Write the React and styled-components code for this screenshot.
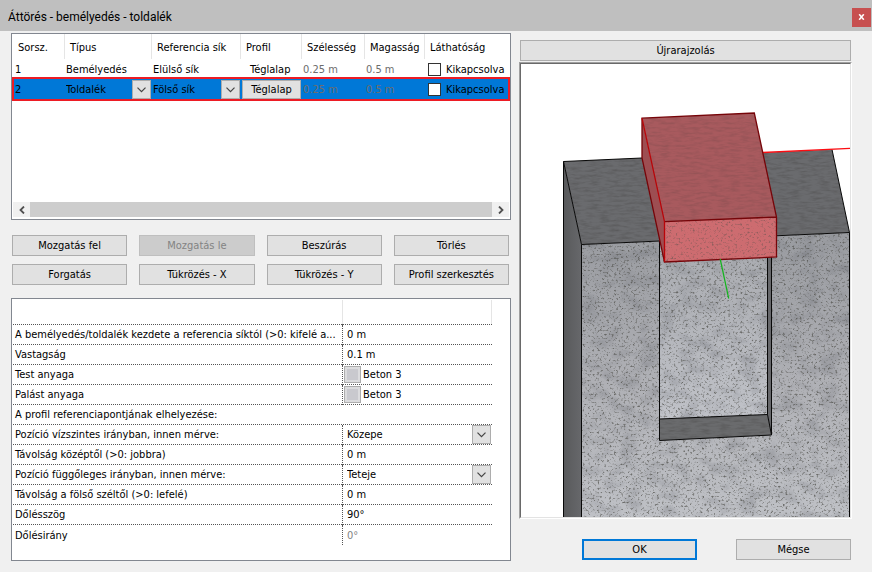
import React, { useState } from 'react';
import styled, { createGlobalStyle } from 'styled-components';

const GlobalStyle = createGlobalStyle`
  * {
    box-sizing: border-box;
  }

  body {
    margin: 0;
    background: #f0f0f0;
    color: #000;
    font-family: 'DejaVu Sans Condensed', Tahoma, sans-serif;
    font-size: 11px;
    line-height: 14px;
  }

  button,
  input,
  select {
    margin: 0;
    color: inherit;
    font: inherit;
  }
`;

const TitleBar = styled.header`
  display: flex;
  align-items: center;
  justify-content: space-between;
  height: 31px;
  padding: 3px 1px 0 8px;
  background: #bfbfbf;
`;

const Title = styled.h1`
  margin: 0;
  font-family: Roboto, 'Segoe UI', sans-serif;
  font-size: 12px;
  font-weight: 400;
  line-height: 20px;
`;

const CloseButton = styled.button`
  display: grid;
  place-items: center;
  width: 19px;
  height: 19px;
  padding: 0;
  border: 0;
  background: #c75050;
`;

const Content = styled.main`
  display: grid;
  grid-template-columns: minmax(0, 500fr) minmax(0, 333fr);
  gap: 8px;
  padding: 2px 20px 11px 11px;
`;

const Preview = styled.section`
  display: flex;
  flex-direction: column;
  padding-top: 7px;
`;

const Panel = styled.div`
  border: 1px solid #828790;
  background: #fff;
`;

const ListArea = styled.div`
  min-height: 168px;
  padding: 0 2px;
`;

const List = styled.table`
  width: 100%;
  border-spacing: 0;
  table-layout: fixed;
`;

const HeadCell = styled.th`
  width: ${({ $width }) => $width || 'auto'};
  height: 25px;
  padding: 2px 0 0 ${({ $first }) => ($first ? '4px' : '5px')};
  border-left: ${({ $first }) => ($first ? '0' : '1px solid #e5e5e5')};
  font-weight: 400;
  text-align: left;
  white-space: nowrap;
`;

const ListRow = styled.tr`
  background: ${({ $selected }) => ($selected ? '#0078d7' : '#fff')};
  outline: ${({ $selected }) => ($selected ? '2px solid #ed1c24' : 'none')};
`;

const ListCell = styled.td`
  height: 20px;
  padding: 1px 0 0 ${({ $indent }) => $indent || '2px'};
  color: ${({ $muted }) => ($muted ? '#6d6d6d' : 'inherit')};
  white-space: nowrap;
`;

const CheckLabel = styled.label`
  display: flex;
  align-items: center;
  gap: 5px;
`;

const CheckBox = styled.input`
  flex: none;
  width: 13px;
  height: 13px;
  border: 1px solid #333;
  background: #fff;
  appearance: none;

  &:checked {
    background: #333;
    box-shadow: inset 0 0 0 2px #fff;
  }
`;

const ComboBox = styled.div`
  display: grid;
  grid-template-columns: minmax(0, 1fr) 19px;
  height: 19px;
`;

const ComboSelect = styled.select`
  grid-area: 1 / 1 / 2 / 3;
  padding: 0 20px 0 0;
  border: 0;
  border-radius: 0;
  background: transparent;
  appearance: none;
`;

const ComboArrow = styled.span`
  grid-area: 1 / 2 / 2 / 3;
  display: grid;
  place-items: center;
  border: 1px solid #adadad;
  background: #e1e1e1;
  pointer-events: none;
`;

const ScrollBar = styled.div`
  display: flex;
  height: 15px;
  margin: 0 1px 2px;
`;

const ScrollButton = styled.button`
  display: grid;
  place-items: center;
  width: 17px;
  padding: 0;
  border: 0;
  background: #f0f0f0;
`;

const ScrollThumb = styled.div`
  flex: 1;
  background: #cdcdcd;
`;

const Button = styled.button`
  height: 21px;
  padding: 0 4px;
  border: ${({ $primary }) => ($primary ? '2px solid #0078d7' : '1px solid #adadad')};
  background: #e1e1e1;
  line-height: 14px;
  white-space: nowrap;

  &:disabled {
    border-color: #bfbfbf;
    background: #ccc;
    color: #838383;
  }
`;

const CellButton = styled(Button)`
  display: block;
  width: 100%;
  height: 19px;
`;

const ButtonGrid = styled.div`
  display: grid;
  grid-template-columns: repeat(4, minmax(0, 1fr));
  gap: 8px 12px;
  margin: 15px 2px 13px 1px;
`;

const Properties = styled(Panel)`
  padding: 0 18px 15px 1px;
`;

const PropertyTable = styled.table`
  width: 100%;
  border-spacing: 0;
  table-layout: fixed;
`;

const PropertyHead = styled.td`
  width: ${({ $width }) => $width || 'auto'};
  height: 26px;
  padding: 1px 0 0;
  border-bottom: 1px dotted #555;
`;

const HeadSeparator = styled.div`
  height: 24px;
  border-left: ${({ $left }) => ($left ? '1px solid #e5e5e5' : '0')};
  border-right: ${({ $right }) => ($right ? '1px solid #e5e5e5' : '0')};
`;

const PropertyName = styled.th`
  height: 20px;
  padding: 1px 0 0 2px;
  border-bottom: ${({ $last }) => ($last ? '0' : '1px dotted #555')};
  overflow: hidden;
  font-weight: 400;
  text-align: left;
  text-overflow: ellipsis;
  white-space: nowrap;
`;

const PropertyValue = styled.td`
  height: 20px;
  padding: 0 0 0 1px;
  border-left: 1px dotted #555;
  border-bottom: ${({ $last }) => ($last ? '0' : '1px dotted #555')};
`;

const ValueInput = styled.input`
  display: block;
  width: 100%;
  height: 18px;
  padding: 0 3px;
  border: 0;
  background: transparent;

  &:disabled {
    color: #838383;
  }
`;

const ValueCombo = styled(ComboBox)`
  padding-right: 1px;

  select {
    padding-left: 3px;
  }
`;

const Material = styled.div`
  display: flex;
  align-items: center;
  gap: 2px;
`;

const Swatch = styled.button`
  width: 17px;
  height: 17px;
  padding: 0;
  border: 1px solid #adadad;
  background: #c9c9ce;
  box-shadow: inset 0 0 0 2px #dcdcde;
`;

const RedrawButton = styled(Button)`
  margin: 0 1px 1px;
`;

const Viewport = styled.div`
  border: 1px solid;
  border-color: #a0a0a0 #fff #fff #a0a0a0;
`;

const ViewportInner = styled.div`
  border: 1px solid;
  border-color: #696969 #e3e3e3 #e3e3e3 #696969;
  background: #fff;

  svg {
    display: block;
    width: 100%;
    height: auto;
  }
`;

const Footer = styled.footer`
  display: flex;
  justify-content: flex-end;
  gap: 39px;
  margin: 20px 1px 0;

  button {
    width: 115px;
  }
`;

const Chevron = () => (
  <svg width="9" height="6" viewBox="0 0 9 6" fill="none" aria-hidden="true">
    <path d="M0.5 0.7L4.5 4.7L8.5 0.7" stroke="#444" strokeWidth="1.2" />
  </svg>
);

const Combo = ({ as: Box = ComboBox, options, ...rest }) => (
  <Box>
    <ComboSelect {...rest}>
      {options.map((option) => (
        <option key={option}>{option}</option>
      ))}
    </ComboSelect>
    <ComboArrow>
      <Chevron />
    </ComboArrow>
  </Box>
);

const columns = [
  { title: 'Sorsz.', width: '50px' },
  { title: 'Típus', width: '87px' },
  { title: 'Referencia sík', width: '89px' },
  { title: 'Profil', width: '61px' },
  { title: 'Szélesség', width: '63px' },
  { title: 'Magasság', width: '60px' },
  { title: 'Láthatóság' },
];

const types = ['Bemélyedés', 'Toldalék'];
const planes = ['Elülső sík', 'Fölső sík'];

const items = [
  { id: 1, type: 'Bemélyedés', plane: 'Elülső sík' },
  { id: 2, type: 'Toldalék', plane: 'Fölső sík' },
];

const actions = [
  'Mozgatás fel',
  'Mozgatás le',
  'Beszúrás',
  'Törlés',
  'Forgatás',
  'Tükrözés - X',
  'Tükrözés - Y',
  'Profil szerkesztés',
];

const properties = [
  {
    id: 'start',
    name: 'A bemélyedés/toldalék kezdete a referencia síktól (>0: kifelé a...',
    value: '0 m',
  },
  { id: 'thickness', name: 'Vastagság', value: '0.1 m' },
  { id: 'body', name: 'Test anyaga', material: 'Beton 3' },
  { id: 'mantle', name: 'Palást anyaga', material: 'Beton 3' },
  { id: 'anchor', name: 'A profil referenciapontjának elhelyezése:' },
  {
    id: 'horizontal',
    name: 'Pozíció vízszintes irányban, innen mérve:',
    options: ['Közepe', 'Bal széle', 'Jobb széle'],
  },
  { id: 'fromCenter', name: 'Távolság középtől (>0: jobbra)', value: '0 m' },
  {
    id: 'vertical',
    name: 'Pozíció függőleges irányban, innen mérve:',
    options: ['Teteje', 'Közepe', 'Alja'],
  },
  { id: 'fromTop', name: 'Távolság a fölső széltől (>0: lefelé)', value: '0 m' },
  { id: 'angle', name: 'Dőlésszög', value: '90°' },
  { id: 'direction', name: 'Dőlésirány', value: '0°', disabled: true },
];

const ItemRow = ({ item, selected, onSelect }) => {
  const [hidden, setHidden] = useState(false);

  return (
    <ListRow $selected={selected} onClick={onSelect}>
      <ListCell $indent="1px">{item.id}</ListCell>
      <ListCell>
        {selected ? (
          <Combo aria-label="Típus" defaultValue={item.type} options={types} />
        ) : (
          item.type
        )}
      </ListCell>
      <ListCell>
        {selected ? (
          <Combo
            aria-label="Referencia sík"
            defaultValue={item.plane}
            options={planes}
          />
        ) : (
          item.plane
        )}
      </ListCell>
      <ListCell $indent={selected ? '2px' : '10px'}>
        {selected ? <CellButton type="button">Téglalap</CellButton> : 'Téglalap'}
      </ListCell>
      <ListCell $muted>0.25 m</ListCell>
      <ListCell $muted>0.5 m</ListCell>
      <ListCell $indent="4px">
        <CheckLabel>
          <CheckBox
            type="checkbox"
            checked={hidden}
            onChange={() => setHidden(!hidden)}
          />
          Kikapcsolva
        </CheckLabel>
      </ListCell>
    </ListRow>
  );
};

const PropertyRow = ({ property, last }) => {
  const { id, name, value, material, options, disabled } = property;

  if (!value && !material && !options) {
    return (
      <tr>
        <PropertyName colSpan={2}>{name}</PropertyName>
      </tr>
    );
  }

  return (
    <tr>
      <PropertyName $last={last} scope="row">
        <label htmlFor={id}>{name}</label>
      </PropertyName>
      <PropertyValue $last={last}>
        {value && <ValueInput id={id} defaultValue={value} disabled={disabled} />}
        {material && (
          <Material>
            <Swatch id={id} type="button" />
            {material}
          </Material>
        )}
        {options && <Combo as={ValueCombo} id={id} options={options} />}
      </PropertyValue>
    </tr>
  );
};

const Scene = () => (
  <svg viewBox="521 64 329 453" role="img" aria-label="3D">
    <defs>
      <linearGradient id="front" x1="0" y1="0" x2="0" y2="1">
        <stop offset="0" stopColor="#999ba0" />
        <stop offset="0.55" stopColor="#b0b1b6" />
        <stop offset="1" stopColor="#bfc1c6" />
      </linearGradient>
      <linearGradient id="niche" x1="0" y1="0" x2="0" y2="1">
        <stop offset="0" stopColor="#a8aaaf" />
        <stop offset="1" stopColor="#c0c2c8" />
      </linearGradient>
      <linearGradient id="side" x1="0" y1="0" x2="1" y2="0">
        <stop offset="0" stopColor="#58595b" />
        <stop offset="1" stopColor="#67686b" />
      </linearGradient>
      <filter id="speckle" x="0" y="0" width="100%" height="100%" colorInterpolationFilters="sRGB">
        <feTurbulence type="fractalNoise" baseFrequency="0.42 0.5" numOctaves="3" seed="7" />
        <feColorMatrix values="0 0 0 0 0.3  0 0 0 0 0.3  0 0 0 0 0.28  4 0 0 0 -2.2" />
        <feComposite in2="SourceGraphic" operator="in" />
      </filter>
      <filter id="blotch" x="0" y="0" width="100%" height="100%" colorInterpolationFilters="sRGB">
        <feTurbulence type="fractalNoise" baseFrequency="0.05 0.08" numOctaves="4" seed="3" />
        <feColorMatrix values="0 0 0 0 0.3  0 0 0 0 0.31  0 0 0 0 0.34  1.6 0 0 0 -0.7" />
        <feComposite in2="SourceGraphic" operator="in" />
      </filter>
      <filter id="streak" x="0" y="0" width="100%" height="100%" colorInterpolationFilters="sRGB">
        <feTurbulence type="fractalNoise" baseFrequency="0.1 0.4" numOctaves="3" seed="11" />
        <feColorMatrix values="0 0 0 0 0.2  0 0 0 0 0.19  0 0 0 0 0.18  2 0 0 0 -0.8" />
        <feComposite in2="SourceGraphic" operator="in" />
      </filter>
    </defs>

    {/* concrete block */}
    <path d="M563.5 161.5L581.5 244.5V517H563.5Z" fill="url(#side)" />
    <path d="M563.5 161.5L832 149.5L849.5 232.5L581.5 244.5Z" fill="#6a6b6e" />
    <path d="M563.5 161.5L832 149.5L849.5 232.5L581.5 244.5Z" filter="url(#streak)" opacity="0.26" />
    <path d="M581.5 244.5L849.5 232.5V517H581.5Z" fill="url(#front)" />

    {/* recess */}
    <path d="M659.5 241H767.5V414.5L659.5 419Z" fill="url(#niche)" />
    <path d="M581.5 244.5L849.5 232.5V517H581.5Z" filter="url(#blotch)" opacity="0.35" />
    <path d="M581.5 244.5L849.5 232.5V517H581.5Z" filter="url(#speckle)" opacity="0.7" />
    <path d="M767.5 236H771.5V435L767.5 414.5Z" fill="#67686b" />
    <path d="M659.5 419L767.5 414.5L771.5 435L659.5 440.5Z" fill="#6a6b6d" />
    <path d="M659.5 419L767.5 414.5L771.5 435L659.5 440.5Z" filter="url(#streak)" opacity="0.25" />

    <g fill="none" stroke="#080808" strokeWidth="1">
      <path d="M563.5 517V161.5L642 158M563.5 161.5L581.5 244.5V517M581.5 244.5L660 241M771 236L849.5 232.5L832 149.5M849.5 232.5V517" />
      <path d="M659.5 241V440.5L771.5 435V236M659.5 419L767.5 414.5V236M767.5 414.5L771.5 435" />
    </g>
    <path d="M763 152.5L850 148.3" stroke="#fb0d12" strokeWidth="1.3" />

    {/* extrusion */}
    <path d="M642 118.2L754.3 113L776.5 217L664.5 221.7Z" fill="#a85a5e" />
    <path d="M642 118.2L664.5 221.7V262L642 158Z" fill="#9d4e52" />
    <path d="M664.5 221.7L776.5 217V257L664.5 262Z" fill="#cd6c70" />
    <path d="M642 118.2L754.3 113L776.5 217L664.5 221.7Z" filter="url(#streak)" opacity="0.16" />
    <path d="M664.5 221.7L776.5 217V257L664.5 262Z" filter="url(#speckle)" opacity="0.45" />
    <path
      d="M642 118.2L754.3 113L776.5 217V257L664.5 262L642 158ZM664.5 221.7L776.5 217"
      fill="none"
      stroke="#760509"
      strokeWidth="1.3"
    />
    <path d="M642 118.2L664.5 221.7V262" fill="none" stroke="#b90509" strokeWidth="1.3" />
    <path d="M720.2 259L728.7 298.5" stroke="#14b51e" strokeWidth="1.2" />
  </svg>
);

const App = () => {
  const [selected, setSelected] = useState(2);

  return (
    <>
      <GlobalStyle />
      <TitleBar>
        <Title>Áttörés - bemélyedés - toldalék</Title>
        <CloseButton type="button" aria-label="Bezárás">
          <svg width="7" height="6" viewBox="0 0 7 6" aria-hidden="true">
            <path d="M1.2 0.3L5.8 5.7M5.8 0.3L1.2 5.7" stroke="#fff" strokeWidth="1.6" />
          </svg>
        </CloseButton>
      </TitleBar>
      <Content>
        <section>
          <Panel>
            <ListArea>
              <List>
                <thead>
                  <tr>
                    {columns.map(({ title, width }, index) => (
                      <HeadCell key={title} $width={width} $first={index === 0}>
                        {title}
                      </HeadCell>
                    ))}
                  </tr>
                </thead>
                <tbody>
                  {items.map((item) => (
                    <ItemRow
                      key={item.id}
                      item={item}
                      selected={item.id === selected}
                      onSelect={() => setSelected(item.id)}
                    />
                  ))}
                </tbody>
              </List>
            </ListArea>
            <ScrollBar>
              <ScrollButton type="button" aria-label="Balra">
                <svg width="6" height="8" viewBox="0 0 6 8" fill="none">
                  <path d="M5 0.5L1.5 4L5 7.5" stroke="#505050" strokeWidth="1.8" />
                </svg>
              </ScrollButton>
              <ScrollThumb />
              <ScrollButton type="button" aria-label="Jobbra">
                <svg width="6" height="8" viewBox="0 0 6 8" fill="none">
                  <path d="M1 0.5L4.5 4L1 7.5" stroke="#505050" strokeWidth="1.8" />
                </svg>
              </ScrollButton>
            </ScrollBar>
          </Panel>
          <ButtonGrid>
            {actions.map((action) => (
              <Button
                key={action}
                type="button"
                disabled={action === 'Mozgatás le' && selected === items.length}
              >
                {action}
              </Button>
            ))}
          </ButtonGrid>
          <Properties>
            <PropertyTable>
              <thead>
                <tr>
                  <PropertyHead>
                    <HeadSeparator />
                  </PropertyHead>
                  <PropertyHead $width="150px">
                    <HeadSeparator $left $right />
                  </PropertyHead>
                </tr>
              </thead>
              <tbody>
                {properties.map((property, index) => (
                  <PropertyRow
                    key={property.id}
                    property={property}
                    last={index === properties.length - 1}
                  />
                ))}
              </tbody>
            </PropertyTable>
          </Properties>
        </section>
        <Preview>
          <RedrawButton type="button">Újrarajzolás</RedrawButton>
          <Viewport>
            <ViewportInner>
              <Scene />
            </ViewportInner>
          </Viewport>
          <Footer>
            <Button type="button" $primary>
              OK
            </Button>
            <Button type="button">Mégse</Button>
          </Footer>
        </Preview>
      </Content>
    </>
  );
};

export default App;
